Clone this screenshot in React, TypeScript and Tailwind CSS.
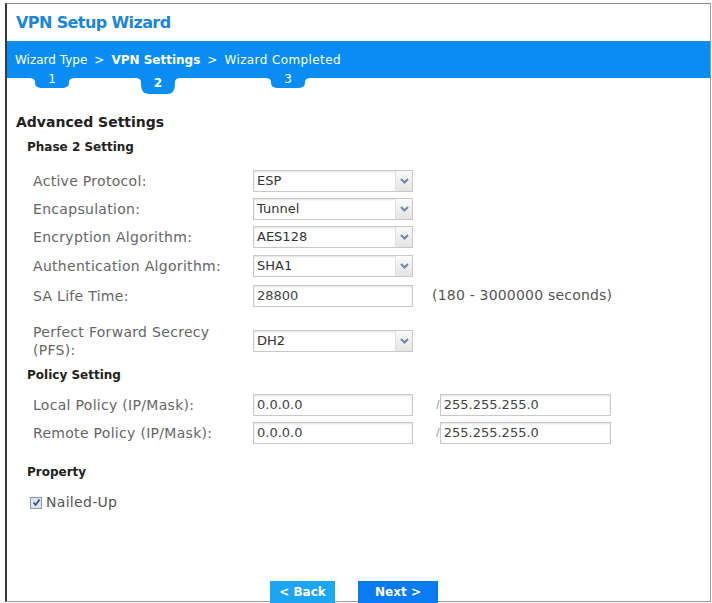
import React from "react";

const font = { fontFamily: '"DejaVu Sans", "Liberation Sans", sans-serif' };

function Bump({ left, active, num }: { left: number; active?: boolean; num: string }) {
  const d = active ? 16 : 10;
  return (
    <>
      <svg
        width="46"
        height={d}
        viewBox={`0 0 46 ${d}`}
        className="absolute top-[37px] block"
        style={{ left }}
      >
        <path
          d={`M0 0 L46 0 Q40 0 40 4 C40 ${d} 36 ${d} 29 ${d} L17 ${d} C10 ${d} 6 ${d} 6 4 Q6 0 0 0 Z`}
          fill="#0a8df2"
        />
      </svg>
      <span
        className={`absolute w-[46px] text-center text-white text-[12px] leading-none ${active ? "font-bold top-[36px]" : "top-[32px]"}`}
        style={{ left }}
      >
        {num}
      </span>
    </>
  );
}

function Chevron() {
  return (
    <svg width="9" height="6" viewBox="0 0 9 6">
      <path d="M1 1 L4.5 4.5 L8 1" stroke="#6d89ad" strokeWidth="2" fill="none" />
    </svg>
  );
}

function Select({ value }: { value: string }) {
  return (
    <div className="w-[160px] h-[22px] border border-[#c9c9c9] bg-white shadow-[inset_0_1px_2px_rgba(0,0,0,0.12)] flex items-center">
      <span className="flex-1 pl-[3px] text-[13px] text-[#333]">{value}</span>
      <span className="w-[17px] h-full flex items-center justify-center bg-gradient-to-b from-[#fafafa] to-[#e4e4e4] border-l border-[#e0e0e0]">
        <Chevron />
      </span>
    </div>
  );
}

function Input({ value, w = 160 }: { value: string; w?: number }) {
  return (
    <div
      className="h-[22px] border border-[#c9c9c9] bg-white shadow-[inset_0_1px_2px_rgba(0,0,0,0.12)] flex items-center pl-[3px] text-[13px] text-[#444]"
      style={{ width: w }}
    >
      {value}
    </div>
  );
}

function Row({ label, children, h = 28, cls = "" }: { label: React.ReactNode; children: React.ReactNode; h?: number; cls?: string }) {
  return (
    <div className={`flex items-center pl-[26px] ${cls}`} style={{ height: h }}>
      <div className="w-[220px] text-[14px] tracking-[0.3px] text-[#666] leading-[18px]">{label}</div>
      {children}
    </div>
  );
}

export default function App() {
  return (
    <div className="w-[712px] h-[603px] bg-white overflow-hidden" style={font}>
      <div className="ml-[5px] mt-[3px] w-[706px] h-[599px] border-l-2 border-l-[#3a3a3a] border-t border-t-[#8a8a8a] border-r border-r-[#9a9a9a] border-b border-b-[#9a9a9a] flex flex-col relative">
        <div className="h-[37px] flex items-center pl-[9px] text-[16px] font-bold text-[#1b86d8] tracking-[-0.6px]">
          VPN Setup Wizard
        </div>
        <div className="relative h-[37px] bg-[#0a8df2] flex items-center pl-[8px] text-[12px] text-white">
          <span>Wizard Type</span>
          <span className="mx-[7px]">&gt;</span>
          <span className="font-bold">VPN Settings</span>
          <span className="mx-[7px]">&gt;</span>
          <span className="tracking-[0.4px]">Wizard Completed</span>
          <Bump left={22} num="1" />
          <Bump left={128} num="2" active />
          <Bump left={258} num="3" />
        </div>
        <div className="pl-[9px] pt-[35px] text-[14px] font-bold text-[#222] leading-[18px]">Advanced Settings</div>
        <div className="pl-[20px] pt-[7px] text-[12px] font-bold text-[#222] leading-[18px]">Phase 2 Setting</div>
        <div className="pt-[11px] flex flex-col">
          <Row label="Active Protocol:"><Select value="ESP" /></Row>
          <Row label="Encapsulation:"><Select value="Tunnel" /></Row>
          <Row label="Encryption Algorithm:"><Select value="AES128" /></Row>
          <Row label="Authentication Algorithm:" h={29}><Select value="SHA1" /></Row>
          <Row label="SA Life Time:" h={31}>
            <Input value="28800" />
            <span className="ml-[19px] text-[14px] tracking-[0.2px] text-[#555]">(180 - 3000000 seconds)</span>
          </Row>
          <Row label={<>Perfect Forward Secrecy<br />(PFS):</>} h={36} cls="mt-[12px]">
            <Select value="DH2" />
          </Row>
        </div>
        <div className="pl-[20px] pt-[7px] text-[12px] font-bold text-[#222] leading-[18px]">Policy Setting</div>
        <div className="pt-[7px] flex flex-col">
          <Row label="Local Policy (IP/Mask):">
            <Input value="0.0.0.0" />
            <span className="ml-[23px] text-[11px] text-[#999]">/</span>
            <Input value="255.255.255.0" w={171} />
          </Row>
          <Row label="Remote Policy (IP/Mask):">
            <Input value="0.0.0.0" />
            <span className="ml-[23px] text-[11px] text-[#999]">/</span>
            <Input value="255.255.255.0" w={171} />
          </Row>
        </div>
        <div className="pl-[20px] pt-[16px] text-[12px] font-bold text-[#222] leading-[18px]">Property</div>
        <div className="pl-[23px] pt-[11px] flex items-center gap-[4px] text-[14px] tracking-[0.3px] text-[#555]">
          <span className="w-[12px] h-[12px] border border-[#8d9bb0] bg-[#dde4ee] flex items-center justify-center">
            <svg width="9" height="9" viewBox="0 0 9 9">
              <path d="M1.5 4.5 L3.6 7 L7.5 1.5" stroke="#2d4a7a" strokeWidth="1.6" fill="none" />
            </svg>
          </span>
          <span>Nailed-Up</span>
        </div>
        <div className="flex-1" />
        <div className="flex gap-[23px] pl-[263px] h-[20px]">
          <div className="w-[65px] h-[22px] bg-[#1aa6f2] text-white text-[12px] font-bold flex items-center justify-center">&lt; Back</div>
          <div className="w-[80px] h-[22px] bg-[#0a7bf0] text-white text-[12px] font-bold flex items-center justify-center">Next &gt;</div>
        </div>
      </div>
    </div>
  );
}
